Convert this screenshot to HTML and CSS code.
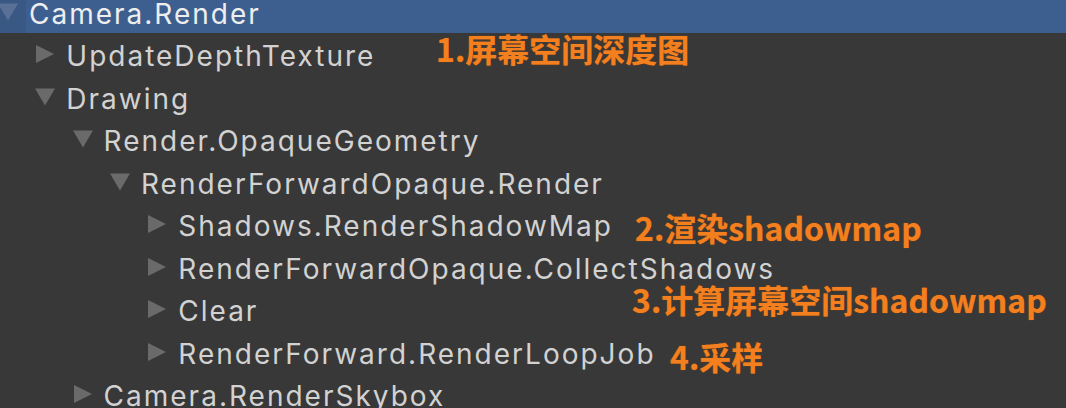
FILE: index.html
```html
<!DOCTYPE html>
<html lang="zh-CN">
<head>
<meta charset="utf-8">
<title>Profiler Hierarchy</title>
<link rel="stylesheet" href="styles.css">
</head>
<body>
<div class="panel">
  <div class="tree">
    <div class="row l0 selected"><svg class="arrow" viewBox="0 0 20 17"><polygon points="0,0 20,0 10,17"/></svg><span class="label">Camera.Render</span></div>
    <div class="row l1"><svg class="arrow" viewBox="0 0 20 18"><polygon points="1,0 19,9 1,18"/></svg><span class="label">UpdateDepthTexture</span></div>
    <div class="row l1"><svg class="arrow" viewBox="0 0 20 17"><polygon points="0,0 20,0 10,17"/></svg><span class="label">Drawing</span></div>
    <div class="row l2"><svg class="arrow" viewBox="0 0 20 17"><polygon points="0,0 20,0 10,17"/></svg><span class="label">Render.OpaqueGeometry</span></div>
    <div class="row l3"><svg class="arrow" viewBox="0 0 20 17"><polygon points="0,0 20,0 10,17"/></svg><span class="label">RenderForwardOpaque.Render</span></div>
    <div class="row l4"><svg class="arrow" viewBox="0 0 20 18"><polygon points="1,0 19,9 1,18"/></svg><span class="label">Shadows.RenderShadowMap</span></div>
    <div class="row l4"><svg class="arrow" viewBox="0 0 20 18"><polygon points="1,0 19,9 1,18"/></svg><span class="label">RenderForwardOpaque.CollectShadows</span></div>
    <div class="row l4"><svg class="arrow" viewBox="0 0 20 18"><polygon points="1,0 19,9 1,18"/></svg><span class="label">Clear</span></div>
    <div class="row l4"><svg class="arrow" viewBox="0 0 20 18"><polygon points="1,0 19,9 1,18"/></svg><span class="label">RenderForward.RenderLoopJob</span></div>
    <div class="row l2"><svg class="arrow" viewBox="0 0 20 18"><polygon points="1,0 19,9 1,18"/></svg><span class="label">Camera.RenderSkybox</span></div>
  </div>
  <div class="note n1">1.屏幕空间深度图</div>
  <div class="note n2">2.渲染shadowmap</div>
  <div class="note n3">3.计算屏幕空间shadowmap</div>
  <div class="note n4">4.采样</div>
</div>
</body>
</html>
```

FILE: styles.css
```css
html, body {
  margin: 0;
  padding: 0;
  background: #383838;
  overflow: hidden;
}

.panel {
  position: relative;
  width: 1066px;
  height: 408px;
  overflow: hidden;
  background: #383838;
}

.tree {
  display: flex;
  flex-direction: column;
  margin-top: -10px;
}

.row {
  display: flex;
  align-items: center;
  height: 42.5px;
  box-sizing: border-box;
  padding-top: 5px;
  font-family: Inter, "Liberation Sans", sans-serif;
  font-size: 28px;
  letter-spacing: 2px;
  color: #d2d2d2;
  white-space: nowrap;
}

.row.selected {
  background: linear-gradient(to right, #395883 0, #395883 28px, #3d5f8f 28px);
  color: #eeeeee;
}

.arrow {
  flex: none;
  width: 20px;
  height: 18px;
  margin-right: 11px;
  margin-top: -4px;
  fill: #6a6a6a;
}

.selected .arrow {
  fill: #5a7096;
}

.l0 { padding-left: 0; margin-left: -2px; }
.l1 { padding-left: 35.3px; }
.l2 { padding-left: 72.6px; }
.l3 { padding-left: 110px; }
.l4 { padding-left: 147.3px; }

.note {
  position: absolute;
  font-family: "Noto Sans CJK SC", "Noto Sans", sans-serif;
  font-weight: 700;
  font-size: 32px;
  line-height: 32px;
  color: #f47f1e;
  text-shadow: 0 0 1px #b35c12;
  white-space: nowrap;
}

.n1 { left: 436px; top: 32px; }
.n2 { left: 635px; top: 211px; }
.n3 { left: 632px; top: 283px; }
.n4 { left: 670px; top: 340px; }
```
